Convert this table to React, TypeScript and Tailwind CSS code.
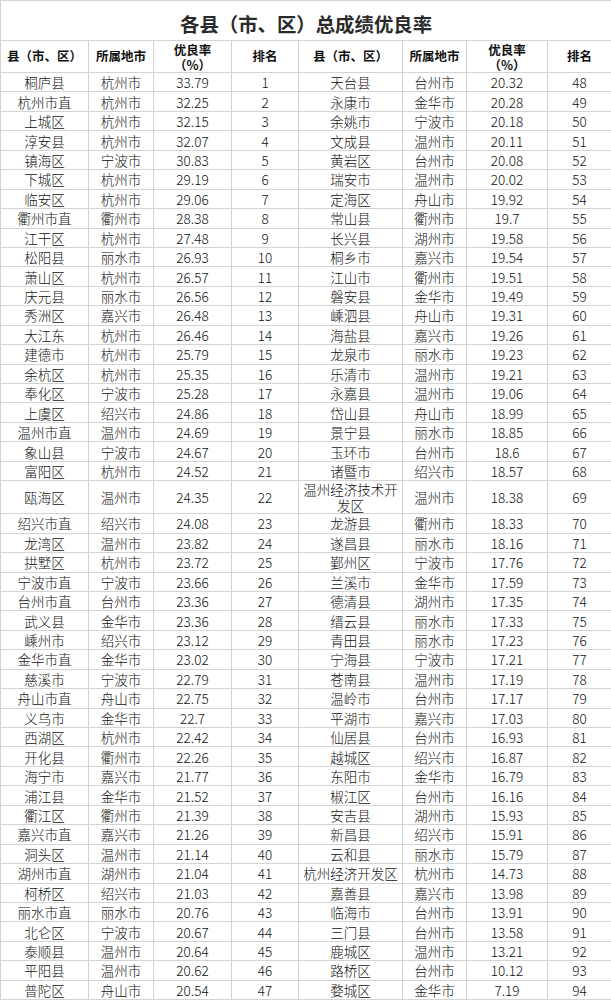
import React from "react";

type Row = [string, string, string, number];

const left: Row[] = [
  ["桐庐县", "杭州市", "33.79", 1],
  ["杭州市直", "杭州市", "32.25", 2],
  ["上城区", "杭州市", "32.15", 3],
  ["淳安县", "杭州市", "32.07", 4],
  ["镇海区", "宁波市", "30.83", 5],
  ["下城区", "杭州市", "29.19", 6],
  ["临安区", "杭州市", "29.06", 7],
  ["衢州市直", "衢州市", "28.38", 8],
  ["江干区", "杭州市", "27.48", 9],
  ["松阳县", "丽水市", "26.93", 10],
  ["萧山区", "杭州市", "26.57", 11],
  ["庆元县", "丽水市", "26.56", 12],
  ["秀洲区", "嘉兴市", "26.48", 13],
  ["大江东", "杭州市", "26.46", 14],
  ["建德市", "杭州市", "25.79", 15],
  ["余杭区", "杭州市", "25.35", 16],
  ["奉化区", "宁波市", "25.28", 17],
  ["上虞区", "绍兴市", "24.86", 18],
  ["温州市直", "温州市", "24.69", 19],
  ["象山县", "宁波市", "24.67", 20],
  ["富阳区", "杭州市", "24.52", 21],
  ["瓯海区", "温州市", "24.35", 22],
  ["绍兴市直", "绍兴市", "24.08", 23],
  ["龙湾区", "温州市", "23.82", 24],
  ["拱墅区", "杭州市", "23.72", 25],
  ["宁波市直", "宁波市", "23.66", 26],
  ["台州市直", "台州市", "23.36", 27],
  ["武义县", "金华市", "23.36", 28],
  ["嵊州市", "绍兴市", "23.12", 29],
  ["金华市直", "金华市", "23.02", 30],
  ["慈溪市", "宁波市", "22.79", 31],
  ["舟山市直", "舟山市", "22.75", 32],
  ["义乌市", "金华市", "22.7", 33],
  ["西湖区", "杭州市", "22.42", 34],
  ["开化县", "衢州市", "22.26", 35],
  ["海宁市", "嘉兴市", "21.77", 36],
  ["浦江县", "金华市", "21.52", 37],
  ["衢江区", "衢州市", "21.39", 38],
  ["嘉兴市直", "嘉兴市", "21.26", 39],
  ["洞头区", "温州市", "21.14", 40],
  ["湖州市直", "湖州市", "21.04", 41],
  ["柯桥区", "绍兴市", "21.03", 42],
  ["丽水市直", "丽水市", "20.76", 43],
  ["北仑区", "宁波市", "20.67", 44],
  ["泰顺县", "温州市", "20.64", 45],
  ["平阳县", "温州市", "20.62", 46],
  ["普陀区", "舟山市", "20.54", 47],
];

const right: Row[] = [
  ["天台县", "台州市", "20.32", 48],
  ["永康市", "金华市", "20.28", 49],
  ["余姚市", "宁波市", "20.18", 50],
  ["文成县", "温州市", "20.11", 51],
  ["黄岩区", "台州市", "20.08", 52],
  ["瑞安市", "温州市", "20.02", 53],
  ["定海区", "舟山市", "19.92", 54],
  ["常山县", "衢州市", "19.7", 55],
  ["长兴县", "湖州市", "19.58", 56],
  ["桐乡市", "嘉兴市", "19.54", 57],
  ["江山市", "衢州市", "19.51", 58],
  ["磐安县", "金华市", "19.49", 59],
  ["嵊泗县", "舟山市", "19.31", 60],
  ["海盐县", "嘉兴市", "19.26", 61],
  ["龙泉市", "丽水市", "19.23", 62],
  ["乐清市", "温州市", "19.21", 63],
  ["永嘉县", "温州市", "19.06", 64],
  ["岱山县", "舟山市", "18.99", 65],
  ["景宁县", "丽水市", "18.85", 66],
  ["玉环市", "台州市", "18.6", 67],
  ["诸暨市", "绍兴市", "18.57", 68],
  ["温州经济技术开发区", "温州市", "18.38", 69],
  ["龙游县", "衢州市", "18.33", 70],
  ["遂昌县", "丽水市", "18.16", 71],
  ["鄞州区", "宁波市", "17.76", 72],
  ["兰溪市", "金华市", "17.59", 73],
  ["德清县", "湖州市", "17.35", 74],
  ["缙云县", "丽水市", "17.33", 75],
  ["青田县", "丽水市", "17.23", 76],
  ["宁海县", "宁波市", "17.21", 77],
  ["苍南县", "温州市", "17.19", 78],
  ["温岭市", "台州市", "17.17", 79],
  ["平湖市", "嘉兴市", "17.03", 80],
  ["仙居县", "台州市", "16.93", 81],
  ["越城区", "绍兴市", "16.87", 82],
  ["东阳市", "金华市", "16.79", 83],
  ["椒江区", "台州市", "16.16", 84],
  ["安吉县", "湖州市", "15.93", 85],
  ["新昌县", "绍兴市", "15.91", 86],
  ["云和县", "丽水市", "15.79", 87],
  ["杭州经济开发区", "杭州市", "14.73", 88],
  ["嘉善县", "嘉兴市", "13.98", 89],
  ["临海市", "台州市", "13.91", 90],
  ["三门县", "台州市", "13.58", 91],
  ["鹿城区", "温州市", "13.21", 92],
  ["路桥区", "台州市", "10.12", 93],
  ["婺城区", "金华市", "7.19", 94],
];

const td = "border border-[#d4d4d4] p-0 text-center align-middle";

function HeadCells() {
  return (
    <>
      <th className={`${td} font-bold`}>县（市、区）</th>
      <th className={`${td} font-bold`}>所属地市</th>
      <th className={`${td} font-bold leading-[15px]`}>
        优良率
        <br />
        （%）
      </th>
      <th className={`${td} font-bold`}>排名</th>
    </>
  );
}

function DataCells({ r }: { r: Row }) {
  return (
    <>
      <td className={`${td} px-0 leading-[16px]`}>{r[0]}</td>
      <td className={td}>{r[1]}</td>
      <td className={td}>{r[2]}</td>
      <td className={td}>{r[3]}</td>
    </>
  );
}

export default function App() {
  return (
    <div className="w-[611px] bg-white font-['Noto_Sans_CJK_SC',sans-serif] text-[#1c1c1c]">
      <table className="w-[611px] table-fixed border-collapse">
        <colgroup>
          <col className="w-[88px]" />
          <col className="w-[65px]" />
          <col className="w-[78px]" />
          <col className="w-[67px]" />
          <col className="w-[104px]" />
          <col className="w-[64px]" />
          <col className="w-[81px]" />
          <col className="w-[64px]" />
        </colgroup>
        <thead>
          <tr className="h-[40px]">
            <th
              colSpan={8}
              className="border border-[#d4d4d4] p-0 pt-[6px] text-center align-middle text-[19.4px] font-bold leading-[24px] text-[#2a2a2a]"
            >
              各县（市、区）总成绩优良率
            </th>
          </tr>
          <tr className="h-[32px] text-[12.5px] text-[#111]">
            <HeadCells />
            <HeadCells />
          </tr>
        </thead>
        <tbody className="text-[13.5px] font-light leading-[16px] text-[#111]">
          {left.map((r, i) => (
            <tr key={i} className={i === 21 ? "h-[32px]" : "h-[19.45px]"}>
              <DataCells r={r} />
              <DataCells r={right[i]} />
            </tr>
          ))}
        </tbody>
      </table>
    </div>
  );
}
